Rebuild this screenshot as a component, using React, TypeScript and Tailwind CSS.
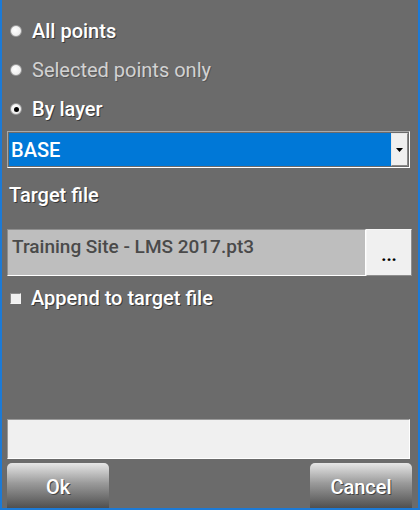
import React from 'react'

const font = { fontFamily: 'Roboto, "Open Sans", sans-serif' }

const Radio = ({ checked }: { checked?: boolean }) => (
  <span className="flex h-[12px] w-[12px] items-center justify-center rounded-full border border-[#9a9a9a] bg-[radial-gradient(circle_at_40%_40%,#ffffff,#e4e4e4)]">
    {checked && <span className="h-[5px] w-[5px] rounded-full bg-black" />}
  </span>
)

const App = () => {
  return (
    <div
      className="flex h-[510px] w-[420px] flex-col border-x-2 border-b-2 border-[#1c7ad6] bg-[#6b6b6b] px-[5px] text-white"
      style={font}
    >
      <div className="flex flex-col gap-[17px] pt-[20px] pl-[3px]">
        <label className="flex h-[22px] items-center gap-[10px]">
          <Radio />
          <span className="text-[20px] font-medium leading-none [text-shadow:1px_1px_0_#3a3a3a]">All points</span>
        </label>
        <label className="flex h-[22px] items-center gap-[10px]">
          <Radio />
          <span className="text-[20px] leading-none text-[#d2d2d2] [text-shadow:1px_1px_0_#555]">Selected points only</span>
        </label>
        <label className="flex h-[22px] items-center gap-[10px]">
          <Radio checked />
          <span className="text-[20px] font-medium leading-none [text-shadow:1px_1px_0_#3a3a3a]">By layer</span>
        </label>
      </div>

      <div className="mt-[11px] flex h-[37px] w-[403px] border border-[#a8a8a8] border-b-white border-r-white p-[1px]">
        <div className="flex flex-1 items-center bg-[#0078d7] pl-[2px] text-[20px] font-medium leading-none">
          BASE
        </div>
        <div className="flex w-[17px] items-center justify-center border border-[#e8e8e8] border-b-[#8a8a8a] border-r-[#8a8a8a] bg-[#f0f0f0]">
          <svg width="7" height="4" viewBox="0 0 7 4">
            <path d="M0 0h7L3.5 4z" fill="#000" />
          </svg>
        </div>
      </div>

      <div className="mt-[17px] pl-[2px] text-[20px] font-medium leading-none [text-shadow:1px_1px_0_#3a3a3a]">
        Target file
      </div>

      <div className="mt-[24px] flex h-[47px] w-[405px]">
        <div className="flex flex-1 items-start border border-[#8e8e8e] border-b-white border-r-white bg-[#bebebe] pl-[4px] pt-[7px] text-[19px] font-medium leading-none text-[#4a4a4a]">
          Training Site - LMS 2017.pt3
        </div>
        <div className="flex w-[46px] items-end justify-center border border-[#f6f6f6] border-b-[#8e8e8e] border-r-[#8e8e8e] bg-[#f0f0f0] pb-[11px] text-[18px] font-bold leading-none text-black">
          ...
        </div>
      </div>

      <label className="mt-[12px] flex items-center gap-[10px] pl-[3px]">
        <span className="h-[11px] w-[11px] border border-[#f4f4f4] border-l-[#8a8a8a] border-t-[#8a8a8a] bg-[#f0f0f0]" />
        <span className="text-[20px] font-medium leading-none [text-shadow:1px_1px_0_#3a3a3a]">Append to target file</span>
      </label>

      <div className="mt-auto h-[40px] w-[403px] border border-[#9a9a9a] border-b-white border-r-white bg-[#f0f0f0]" />

      <div className="mt-[4px] flex justify-between pr-[1px]">
        <button className="h-[45px] w-[102px] rounded-t-[5px] bg-[linear-gradient(#e6e6e6,#9a9a9a_45%,#505050)] pt-[2px] text-[20px] font-medium text-white [text-shadow:1px_1px_0_#444]">
          Ok
        </button>
        <button className="h-[45px] w-[102px] rounded-t-[5px] bg-[linear-gradient(#e6e6e6,#9a9a9a_45%,#505050)] pt-[2px] text-[20px] font-medium text-white [text-shadow:1px_1px_0_#444]">
          Cancel
        </button>
      </div>
    </div>
  )
}

export default App
